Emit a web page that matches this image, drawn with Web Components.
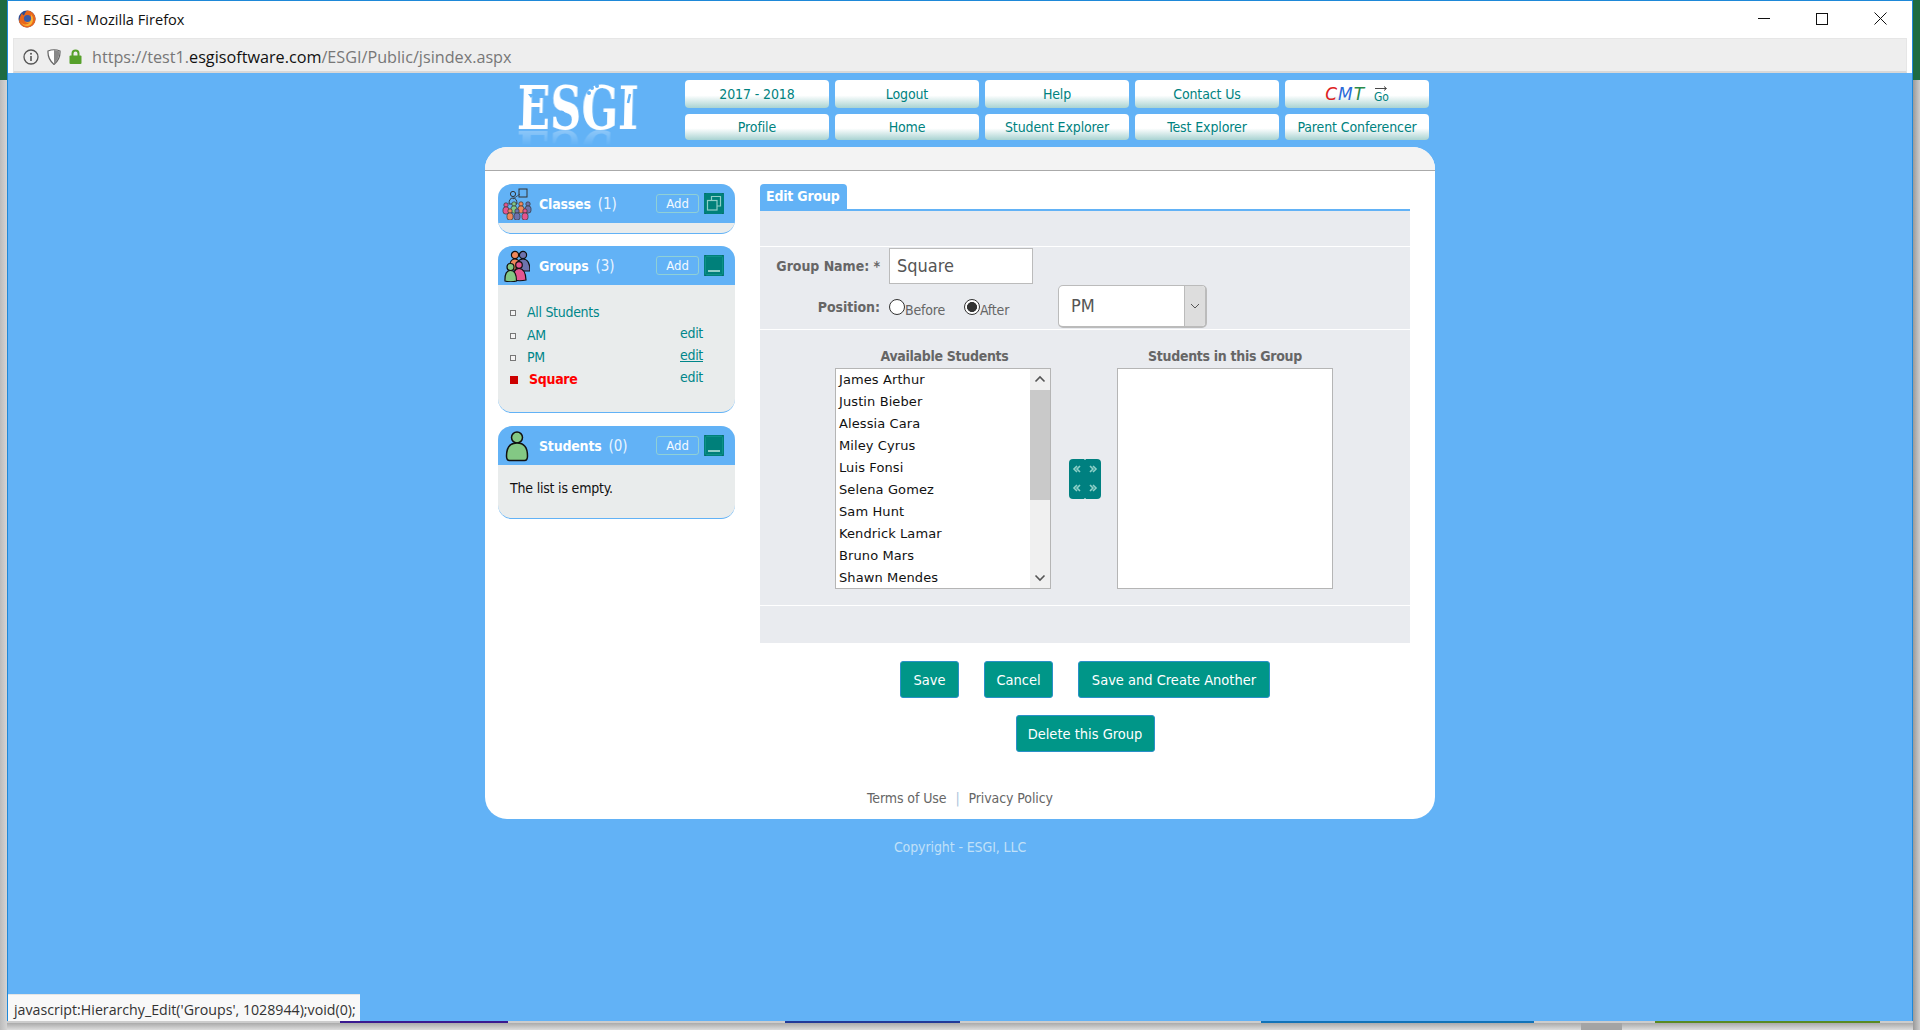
<!DOCTYPE html>
<html><head><meta charset="utf-8"><title>ESGI</title>
<style>
html,body{margin:0;padding:0;width:1920px;height:1030px;overflow:hidden;background:#c6c6c6}
body{font-family:"DejaVu Sans Condensed","Liberation Sans",sans-serif;font-size:14px}
</style></head><body>
<desktop-frame>
<browser-window>
  <esgi-header></esgi-header>
  <esgi-card>
    <side-panel slot="side" name="Classes" count="1" body="11" toggle="restore">
      <svg slot="icon" width="30" height="32" viewBox="0 0 30 32"><g stroke="#333" stroke-width=".7"><rect x="17" y="1" width="8" height="8" fill="none" stroke-width="1"/><path d="M11 11l7-5" fill="none"/><circle cx="11" cy="6" r="2.6" fill="none" stroke-width="1"/><path d="M7 16q0-6 4-6t4 6z" fill="none" stroke-width="1"/><circle cx="4" cy="17" r="2.2" fill="#e4558f"/><rect x="1" y="19" width="6" height="7" rx="2.5" fill="#e4558f"/><circle cx="12" cy="16" r="2.2" fill="#83c884"/><rect x="9" y="18" width="6" height="7" rx="2.5" fill="#83c884"/><circle cx="19" cy="16" r="2.2" fill="#f0875a"/><rect x="16" y="18" width="6" height="7" rx="2.5" fill="#f0875a"/><circle cx="26" cy="16" r="2.2" fill="#6d73ae"/><rect x="23" y="18" width="6" height="7" rx="2.5" fill="#6d73ae"/><circle cx="8" cy="23" r="2.2" fill="#f0875a"/><rect x="5" y="25" width="6" height="7" rx="2.5" fill="#f0875a"/><circle cx="15" cy="23" r="2.2" fill="#6d73ae"/><rect x="12" y="25" width="6" height="7" rx="2.5" fill="#6d73ae"/><circle cx="23" cy="23" r="2.2" fill="#e4558f"/><rect x="20" y="25" width="6" height="7" rx="2.5" fill="#e4558f"/></g></svg>
    </side-panel>
    <side-panel slot="side" name="Groups" count="3" body="128" toggle="min">
      <svg slot="icon" width="26" height="32" viewBox="0 0 26 32"><g stroke="#111" stroke-width="1.2"><circle cx="11" cy="5" r="3.6" fill="#f0875a"/><path d="M5 20q0-11 6-11t6 11z" fill="#f0875a"/><circle cx="19" cy="5" r="3.6" fill="#6d73ae"/><path d="M12 21q0-12 7-12t7 12z" fill="#6d73ae"/><circle cx="15" cy="15" r="3.3" fill="#e4558f"/><path d="M9.500 30q-1-11.500 5.500-11.500t7 11.500q-6 1.500-12.500 0z" fill="#e4558f"/><circle cx="6.500" cy="17" r="3.500" fill="#83c884"/><path d="M1 31q-.5-10.500 5.500-10.500T12.500 31q-6 1.500-11.500 0z" fill="#83c884"/></g></svg>
      <group-row state="off">All Students</group-row>
      <group-row state="off" edit="1">AM</group-row>
      <group-row state="off" edit="1" hover="1">PM</group-row>
      <group-row state="on" edit="1">Square</group-row>
    </side-panel>
    <side-panel slot="side" name="Students" count="0" body="54" toggle="min" pad="1" style="margin-top:1px">
      <svg slot="icon" width="24" height="32" viewBox="0 0 24 32"><g stroke="#111" stroke-width="1.500" fill="#83c884"><circle cx="12" cy="7.500" r="5.500"/><path d="M1.500 26q0-13 10.500-13t10.500 13q0 4.500-3 4.500H4.500q-3 0-3-4.500z"/></g></svg>
      The list is empty.
    </side-panel>
    <edit-group slot="main"></edit-group>
  </esgi-card>
  <copy-line></copy-line>
</browser-window>
</desktop-frame>
<script>
const def=(n,html)=>customElements.define(n,class extends HTMLElement{
  constructor(){super();this.attachShadow({mode:'open'}).innerHTML=typeof html==='function'?html(this):html;}
});
def('desktop-frame',`<style>
:host{display:grid;grid-template-columns:7px 1906px 7px;width:1920px;height:1030px}
.edge{display:flex;flex-direction:column}
.g{height:80px;background:#1d6b41;flex:none}
.s{flex:1;background:linear-gradient(90deg,#bbb,#d4d4d4)}
.r .s{background:linear-gradient(90deg,#999,#ccc)}
.mid{display:flex;flex-direction:column;height:1030px}
.sh{flex:1;background:linear-gradient(#aaa,#ddd)}
.sh i{display:block;width:41px;height:100%;margin-left:1574px;background:#a4a4a4}
.strip{display:flex;height:2px;flex:none;background:#ccc}
.strip i{display:block;height:2px}
</style>
<div class="edge"><div class="g"></div><div class="s"></div></div>
<div class="mid"><slot></slot><div class="strip"><i style="width:333px"></i><i style="width:168px;background:#3a1a90"></i><i style="width:277px"></i><i style="width:175px;background:#223a98"></i><i style="width:301px"></i><i style="width:273px;background:#1273b8"></i><i style="width:121px"></i><i style="width:225px;background:#5a8a20"></i></div><div class="sh"><i></i></div></div>
<div class="edge r"><div class="g"></div><div class="s"></div></div>`);

def('browser-window',`<style>
:host{display:flex;flex-direction:column;height:1021px;box-sizing:border-box;border:1px solid #1e88d8;border-bottom:0;background:#fff;flex:none;position:relative;font-family:"DejaVu Sans Condensed","Liberation Sans",sans-serif}
.title{height:37px;flex:none;display:flex;align-items:center;padding:0 0 2px 10px;box-sizing:border-box;font:14.600px "Open Sans","Liberation Sans",sans-serif;color:#111}
.title .t{margin-left:7px}
.ctl{margin-left:auto;display:flex;height:36px;align-items:center;padding-right:25px;gap:46px}
.url{height:35px;flex:none;margin:0 5px 0 5px;box-sizing:border-box;background:#eee;border:1px solid #e6e6e6;border-bottom:2px solid #d8d8d8;border-right:1px solid #e6e6e6;display:flex;align-items:center;padding:4px 0 0 8px;font:16.200px "Open Sans","Liberation Sans",sans-serif;color:#777}
.url svg{flex:none;margin-top:-1px}
.url b{font-weight:400;color:#111}
.url span{margin-left:10px}
.page{flex:1;background:#62b2f6;display:flex;flex-direction:column;align-items:center;min-height:0;position:relative}
.status{position:absolute;left:0;bottom:0;width:352px;height:27px;background:#f8f8f8;border-top:1px solid #e4e4e4;box-sizing:border-box;font:14.200px "Open Sans","Liberation Sans",sans-serif;color:#333;padding:5px 0 0 6px;white-space:nowrap;overflow:hidden}
</style>
<div class="title">
<svg width="18" height="18" viewBox="0 0 18 18"><circle cx="9" cy="9" r="8.500" fill="#2a4d96"/><path d="M9 .5a8.500 8.500 0 1 1-8 11.300C2 6 3 5 4 3q.5 2 2 2.500Q7 2.500 9 .5z" fill="#e8661c"/><path d="M3 12q2 4.500 7 4 4.500-1 5-6 .5-3-2-6 1 5-3 5.500-3 0-3 2 2 2 5 .5-2 3-5.500 2.500Q4.500 14 3 12z" fill="#f9b233"/><circle cx="9.500" cy="8.500" r="3.600" fill="#3a5aa8"/></svg>
<span class="t">ESGI - Mozilla Firefox</span>
<div class="ctl">
<svg width="12" height="12" viewBox="0 0 12 12"><path d="M0 5.500h12" stroke="#111" fill="none"/></svg>
<svg width="12" height="12" viewBox="0 0 12 12"><rect x=".5" y=".5" width="11" height="11" stroke="#111" fill="none"/></svg>
<svg width="13" height="13" viewBox="0 0 13 13"><path d="M.5.5l12 12M12.500.5l-12 12" stroke="#111" fill="none"/></svg>
</div></div>
<div class="url">
<svg width="18" height="16" viewBox="0 0 18 16"><circle cx="9" cy="8" r="7" fill="none" stroke="#555" stroke-width="1.300"/><path d="M9 7v5" stroke="#555" stroke-width="1.600"/><circle cx="9" cy="4.700" r="1" fill="#555"/></svg>
<svg style="margin-left:7px" width="14" height="16" viewBox="0 0 14 16"><path d="M1 2q6-2.500 12 0 .5 8-6 13.500Q.5 10 1 2z" fill="#fff" stroke="#666" stroke-width="1.200"/><path d="M7 1v14q5.500-5.500 5.500-12.500Q10 1 7 1z" fill="#888"/></svg>
<svg style="margin-left:8px" width="13" height="15" viewBox="0 0 13 15"><path d="M3.500 7V4.500a3 3 0 0 1 6 0V7" stroke="#57a12b" stroke-width="2" fill="none"/><rect x="0.500" y="6.500" width="12" height="8.500" rx="1" fill="#57a12b"/></svg>
<span>https://test1.<b>esgisoftware.com</b>/ESGI/Public/jsindex.aspx</span>
</div>
<div class="page"><slot></slot><div class="status">javascript:Hierarchy_Edit('Groups', 1028944);void(0);</div></div>`);

def('nav-button',`<style>
:host{display:flex;align-items:center;justify-content:center;border-radius:4px;background:linear-gradient(#fff 0,#fff 55%,#a9d3d2 100%);color:#00827f;font-size:14px;white-space:nowrap;letter-spacing:-.12px}
</style><slot></slot>`);

def('esgi-header',`<style>
:host{display:flex;width:950px;height:74px;flex:none;box-sizing:border-box;padding:7px 6px 0 33px}
.logo{width:167px;flex:none;height:60px;position:relative}
.logo span{display:block;width:130px;font:700 60px/56px "DejaVu Serif",serif;color:#fff;transform:scaleX(.72) skewX(-2deg);transform-origin:0 0;-webkit-box-reflect:below -12px linear-gradient(transparent 62%,rgba(255,255,255,.4));white-space:nowrap}
.logo svg{position:absolute;left:0;top:0}
.grid{display:grid;grid-template-columns:repeat(5,144px);grid-template-rows:28px 26px;gap:6px}
.cmt{font:italic 17px "DejaVu Sans",sans-serif;letter-spacing:1px;margin-right:9px}
.go{display:inline-flex;flex-direction:column;align-items:center;font-size:12px;line-height:11px;color:#00827f}
.go svg{display:block;margin-bottom:1px}
</style>
<div class="logo"><span>ESGI</span>
<svg width="130" height="60" viewBox="0 0 130 60" fill="#62b2f6"><circle cx="71" cy="13" r="2"/><circle cx="74" cy="8" r="2"/><circle cx="79" cy="6" r="2"/><path d="M112 14l-2 9" stroke="#62b2f6" stroke-width="2.500"/><path d="M48 10a4 4 0 1 1-1 6" fill="none" stroke="#62b2f6" stroke-width="1.600"/><path d="M40 38a4 4 0 1 0 1-6" fill="none" stroke="#62b2f6" stroke-width="1.600"/><path d="M10 14h6l-3 4z"/><path d="M78 28l8-4v3l-8 3z"/></svg></div>
<div class="grid">
<nav-button>2017 - 2018</nav-button><nav-button>Logout</nav-button><nav-button>Help</nav-button><nav-button>Contact Us</nav-button>
<nav-button><span class="cmt"><span style="color:#d22">C</span><span style="color:#2a6ad8">M</span><span style="color:#2a8a4a">T</span></span><span class="go"><svg width="14" height="5" viewBox="0 0 14 5"><path d="M1 2.500h11M10 .5l2.500 2-2.500 2" fill="none" stroke="#333" stroke-width=".9"/></svg>Go</span></nav-button>
<nav-button>Profile</nav-button><nav-button>Home</nav-button><nav-button>Student Explorer</nav-button><nav-button>Test Explorer</nav-button><nav-button>Parent Conferencer</nav-button>
</div>`);

def('esgi-card',`<style>
:host{display:block;width:950px;height:672px;flex:none;background:#fff;border-radius:22px;overflow:hidden}
.top{height:23px;background:#f3f3f3;border-bottom:1px solid #aaa}
.body{display:grid;grid-template-columns:237px 650px;column-gap:25px;padding:13px 0 0 13px}
.side{display:flex;flex-direction:column;gap:12px}
.foot{text-align:center;color:#666;font-size:14px;line-height:20px;margin-top:36px;letter-spacing:-.1px}
.foot i{font-style:normal;color:#a9c4dc;margin:0 9px}
</style>
<div class="top"></div>
<div class="body"><div class="side"><slot name="side"></slot></div><div><slot name="main"></slot></div></div>
<div class="foot">Terms of Use<i>|</i>Privacy Policy</div>`);

def('side-panel',t=>{
 const tog=t.getAttribute('toggle')==='restore'
 ?`<svg width="20" height="21" viewBox="0 0 20 21"><rect width="20" height="21" rx="1" fill="#00807a"/><path d="M0 0h2M18 0h2M0 21h2M18 21h2" stroke="#0a5a55"/><path d="M7.500 7V3.500h9V13H13" fill="none" stroke="#8fcfc8" stroke-width="1.200"/><rect x="3.500" y="7.500" width="9.500" height="9.500" fill="none" stroke="#8fcfc8" stroke-width="1.200"/></svg>`
 :`<svg width="20" height="21" viewBox="0 0 20 21"><rect width="20" height="21" rx="1" fill="#00807a"/><path d="M0 0h2M18 0h2M0 21h2M18 21h2" stroke="#0a5a55"/><rect x="1.500" y="1.500" width="17" height="18" rx="1" fill="none" stroke="#0e9188"/><rect x="4" y="15" width="12" height="2" fill="#8fcfc8"/></svg>`;
 const bodyH=+t.getAttribute('body')-1;
 const pad=t.getAttribute('pad')?'15px 12px':(bodyH>20?'16px 0 0 12px':'0');
 return `<style>
:host{display:block;border-radius:14px;overflow:hidden;background:#e9ecec;border-bottom:1px solid #62b2f6;flex:none}
.h{height:39px;background:#62b2f6;display:flex;align-items:center;color:#fff}
.ic{width:41px;flex:none;display:flex;justify-content:center;padding-right:3px;box-sizing:border-box;align-items:center;height:39px}
.n{font-weight:700;font-size:14px;letter-spacing:-.2px}
.c{margin-left:7px;font-size:15px;color:#eaf5ff}
.add{margin-left:auto;width:43px;height:19px;box-sizing:border-box;border:1px solid #8fd0d6;border-radius:3px;font-size:13px;display:flex;align-items:center;justify-content:center;color:#f2faff}
.tog{margin:0 11px 0 5px;display:flex}
.b{height:${bodyH}px;box-sizing:border-box;padding:${pad};color:#111;font-size:14px;letter-spacing:-.2px;overflow:hidden}
</style>
<div class="h"><div class="ic"><slot name="icon"></slot></div><span class="n">${t.getAttribute('name')}</span><span class="c">(${t.getAttribute('count')})</span><div class="add">Add</div><div class="tog">${tog}</div></div>
<div class="b"><slot></slot></div>`});

def('group-row',t=>{const on=t.getAttribute('state')==='on';return `<style>
:host{display:flex;align-items:center;height:22.400px;padding-right:32px;color:${on?'#f00':'#00868a'};font-size:14px;letter-spacing:-.3px;${on?'font-weight:700':''}}
.bu{box-sizing:border-box;width:${on?8:6}px;height:${on?8:6}px;${on?'background:#c00':'border:1px solid #777;background:#f4f4f4'};margin-right:11px;flex:none;margin-top:2px}
.e{margin-left:auto;font-weight:400;color:#00868a;margin-bottom:4px;${t.getAttribute('hover')?'text-decoration:underline':''}}
</style><span class="bu"></span><span><slot></slot></span>${t.getAttribute('edit')?'<span class="e">edit</span>':''}`});

def('list-box',t=>{const items=(t.getAttribute('items')||'').split('|').filter(Boolean);
 const bar=items.length?`<div class="bar"><svg width="20" height="21" viewBox="0 0 20 21"><path d="M5.500 12.500l4.500-4.500 4.500 4.500" fill="none" stroke="#555" stroke-width="1.600"/></svg><div class="th"></div><div class="sp"></div><svg width="20" height="21" viewBox="0 0 20 21"><path d="M5.500 8.500l4.500 4.500 4.500-4.500" fill="none" stroke="#555" stroke-width="1.600"/></svg></div>`:'';
 return `<style>
:host{display:flex;width:216px;height:221px;box-sizing:border-box;border:1px solid #b5b5b5;background:#fff;overflow:hidden}
.l{flex:1;padding-left:3px;font:13px "DejaVu Sans",sans-serif;color:#111;letter-spacing:.1px;overflow:hidden}
.l div{height:22px;line-height:22px;white-space:nowrap}
.bar{width:20px;flex:none;background:#f0f0f0;display:flex;flex-direction:column;height:219px}
.th{height:110px;background:#c9c9c9;flex:none}
.sp{flex:1}
svg{flex:none;display:block}
</style><div class="l">${items.map(i=>`<div>${i}</div>`).join('')}</div>${bar}`});

def('teal-btn',`<style>
:host{display:inline-flex;align-items:center;justify-content:center;height:37px;box-sizing:border-box;background:#009688;border:1px solid #2a90c8;border-radius:3px;color:#fff;font-size:14.500px;white-space:nowrap}
</style><slot></slot>`);

def('edit-group',`<style>
:host{display:block;color:#555}
.tabs{height:25px;border-bottom:2px solid #62b2f6;display:flex}
.tab{width:87px;height:26px;background:#62b2f6;color:#fff;font-weight:700;font-size:14px;line-height:24px;padding-left:6px;box-sizing:border-box;border-radius:4px 4px 0 0;letter-spacing:-.2px}
.sec{background:#e9ebef}
.s0{height:35px;border-bottom:1px solid #fff}
.s1{border-bottom:1px solid #fff;display:grid;grid-template-columns:120px auto 1fr;column-gap:9px;grid-template-rows:36px 43px;row-gap:1px;padding-top:1px;height:81px}
.lab{font-weight:700;color:#666;text-align:right;align-self:center;font-size:14px;white-space:nowrap;letter-spacing:-.05px}
.inp{grid-column:2/4;width:144px;height:36px;box-sizing:border-box;border:1px solid #bbb;background:#fff;font-size:18px;line-height:34px;padding-left:7px;color:#555}
.pos{grid-column:2;display:flex;align-items:center;font-size:14px;color:#666;width:160px;letter-spacing:-.2px}
input{appearance:none;-webkit-appearance:none;margin:0;width:16px;height:16px;border:1px solid #333;border-radius:50%;background:#fff;flex:none;box-sizing:border-box;display:block}
input:checked{background:radial-gradient(circle,#333 0 4.700px,#fff 5.300px)}
.pos span{margin-top:6px;margin-right:19px}
.sel{width:149px;height:43px;box-sizing:border-box;border:1px solid #bbb;border-radius:5px;background:#fff;display:flex;font-size:18px;color:#555;overflow:hidden;border-right-width:2px;border-bottom-width:2px}
.sel b{flex:1;font-weight:400;line-height:40px;padding-left:12px}
.sel i{width:20px;background:#ddd;border-left:1px solid #bbb;display:flex;align-items:center;justify-content:center}
.s2{display:grid;grid-template-columns:216px 50px 232px;padding:16px 0 16px 75px;border-bottom:1px solid #fff;grid-template-rows:22px 221px}
.hd{font-weight:700;color:#666;text-align:center;line-height:20px;font-size:14px;letter-spacing:-.3px;white-space:nowrap}
.hd.a{grid-column:1;padding-left:3px}
.hd.b{grid-column:3;margin-left:16px;width:216px}
.sw{align-self:center;grid-row:2;grid-column:2;display:block;margin:1px 0 0 18px}
.two{grid-column:3;margin-left:16px}
.s3{height:37px}
.row{display:flex;justify-content:center;gap:25px;margin-top:18px}
.row.d{margin-top:17px}
</style>
<div class="tabs"><div class="tab">Edit Group</div></div>
<div class="sec s0"></div>
<div class="sec s1">
<div class="lab">Group Name: *</div><div class="inp">Square</div>
<div class="lab">Position:</div>
<div class="pos"><input type="radio" name="p"><span>Before</span><input type="radio" name="p" checked><span>After</span></div>
<div class="sel"><b>PM</b><i><svg width="10" height="6" viewBox="0 0 10 6"><path d="M1 1l4 4 4-4" fill="none" stroke="#555"/></svg></i></div>
</div>
<div class="sec s2">
<div class="hd a">Available Students</div><div></div><div class="hd b">Students in this Group</div>
<list-box items="James Arthur|Justin Bieber|Alessia Cara|Miley Cyrus|Luis Fonsi|Selena Gomez|Sam Hunt|Kendrick Lamar|Bruno Mars|Shawn Mendes"></list-box>
<svg class="sw" width="32" height="40" viewBox="0 0 32 40"><rect width="32" height="40" rx="4" fill="#008080"/><path d="M16 0v1M16 39v1" stroke="#fff"/><g fill="none" stroke="#8fd0c8" stroke-width="1.600"><path d="M8 7l-3 3 3 3M11 7l-3 3 3 3M21 7l3 3-3 3M24 7l3 3-3 3M8 26l-3 3 3 3M11 26l-3 3 3 3M21 26l3 3-3 3M24 26l3 3-3 3"/></g></svg>
<list-box class="two"></list-box>
</div>
<div class="sec s3"></div>
<div class="row"><teal-btn style="width:59px">Save</teal-btn><teal-btn style="width:69px">Cancel</teal-btn><teal-btn style="width:192px">Save and Create Another</teal-btn></div>
<div class="row d"><teal-btn style="width:139px">Delete this Group</teal-btn></div>`);

def('copy-line',`<style>
:host{display:block;width:950px;text-align:center;color:#c0e0f8;font-size:14px;line-height:20px;margin-top:18px;letter-spacing:-.1px}
</style>Copyright - ESGI, LLC`);
</script>
</body></html>
